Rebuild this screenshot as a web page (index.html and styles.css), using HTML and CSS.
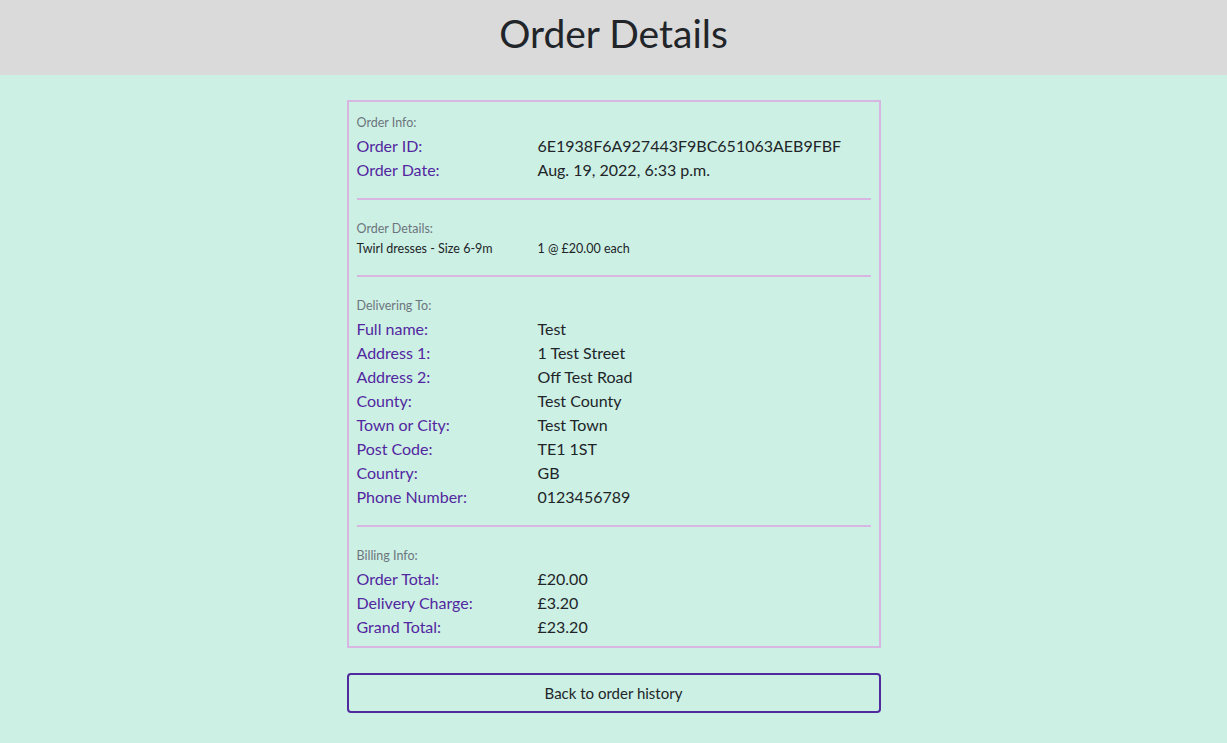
FILE: index.html
```html
<!DOCTYPE html>
<html lang="en">
<head>
<meta charset="utf-8">
<title>Order Details</title>
<link rel="stylesheet" href="styles.css">
</head>
<body>
<header class="page-header">
  <h1 class="page-title">Order Details</h1>
</header>
<main class="content">
  <section class="order-card">
    <div class="order-section">
      <p class="section-label">Order Info:</p>
      <div class="row"><span class="key">Order ID:</span><span class="val">6E1938F6A927443F9BC651063AEB9FBF</span></div>
      <div class="row"><span class="key">Order Date:</span><span class="val">Aug. 19, 2022, 6:33 p.m.</span></div>
    </div>
    <hr class="divider">
    <div class="order-section">
      <p class="section-label">Order Details:</p>
      <div class="row item-row"><span class="item-name">Twirl dresses - Size 6-9m</span><span class="item-qty">1 @ £20.00 each</span></div>
    </div>
    <hr class="divider">
    <div class="order-section">
      <p class="section-label">Delivering To:</p>
      <div class="row"><span class="key">Full name:</span><span class="val">Test</span></div>
      <div class="row"><span class="key">Address 1:</span><span class="val">1 Test Street</span></div>
      <div class="row"><span class="key">Address 2:</span><span class="val">Off Test Road</span></div>
      <div class="row"><span class="key">County:</span><span class="val">Test County</span></div>
      <div class="row"><span class="key">Town or City:</span><span class="val">Test Town</span></div>
      <div class="row"><span class="key">Post Code:</span><span class="val">TE1 1ST</span></div>
      <div class="row"><span class="key">Country:</span><span class="val">GB</span></div>
      <div class="row"><span class="key">Phone Number:</span><span class="val">0123456789</span></div>
    </div>
    <hr class="divider">
    <div class="order-section">
      <p class="section-label">Billing Info:</p>
      <div class="row"><span class="key">Order Total:</span><span class="val">£20.00</span></div>
      <div class="row"><span class="key">Delivery Charge:</span><span class="val">£3.20</span></div>
      <div class="row"><span class="key">Grand Total:</span><span class="val">£23.20</span></div>
    </div>
  </section>
  <a class="back-btn" href="#">Back to order history</a>
</main>
</body>
</html>
```
FILE: styles.css
```css
* { box-sizing: border-box; }
html, body { margin: 0; padding: 0; }
body {
  background: #cdf0e4;
  font-family: Lato, "Open Sans", sans-serif;
  color: #212529;
  min-height: 743px;
}
.page-header {
  background: #dadada;
  height: 75px;
  display: flex;
  align-items: center;
  justify-content: center;
}
.page-title {
  margin: 0;
  font-weight: 400;
  font-size: 39px;
  line-height: 1;
  color: #212529;
  padding-bottom: 8px;
}
.content {
  width: 534px;
  margin: 25px auto 0;
  display: flex;
  flex-direction: column;
  gap: 25px;
}
.order-card {
  border: 2px solid #d7b6e1;
  padding: 11px 8px 7px;
}
.section-label {
  margin: 0 0 1px;
  font-size: 12.5px;
  line-height: 20px;
  color: #6c757d;
}
.row {
  display: grid;
  grid-template-columns: 181px 1fr;
  font-size: 16px;
  line-height: 24px;
}
.key { color: #5227a0; }
.val { color: #212529; }
.item-row {
  font-size: 12.5px;
  line-height: 20px;
  margin-top: -1px;
}
.divider {
  border: 0;
  height: 2px;
  background: #d7b6e1;
  margin: 16px 0 19px;
}
.back-btn {
  display: flex;
  align-items: center;
  justify-content: center;
  height: 40px;
  border: 2px solid #4f2b9e;
  border-radius: 4px;
  color: #212529;
  text-decoration: none;
  font-size: 15px;
}
```
